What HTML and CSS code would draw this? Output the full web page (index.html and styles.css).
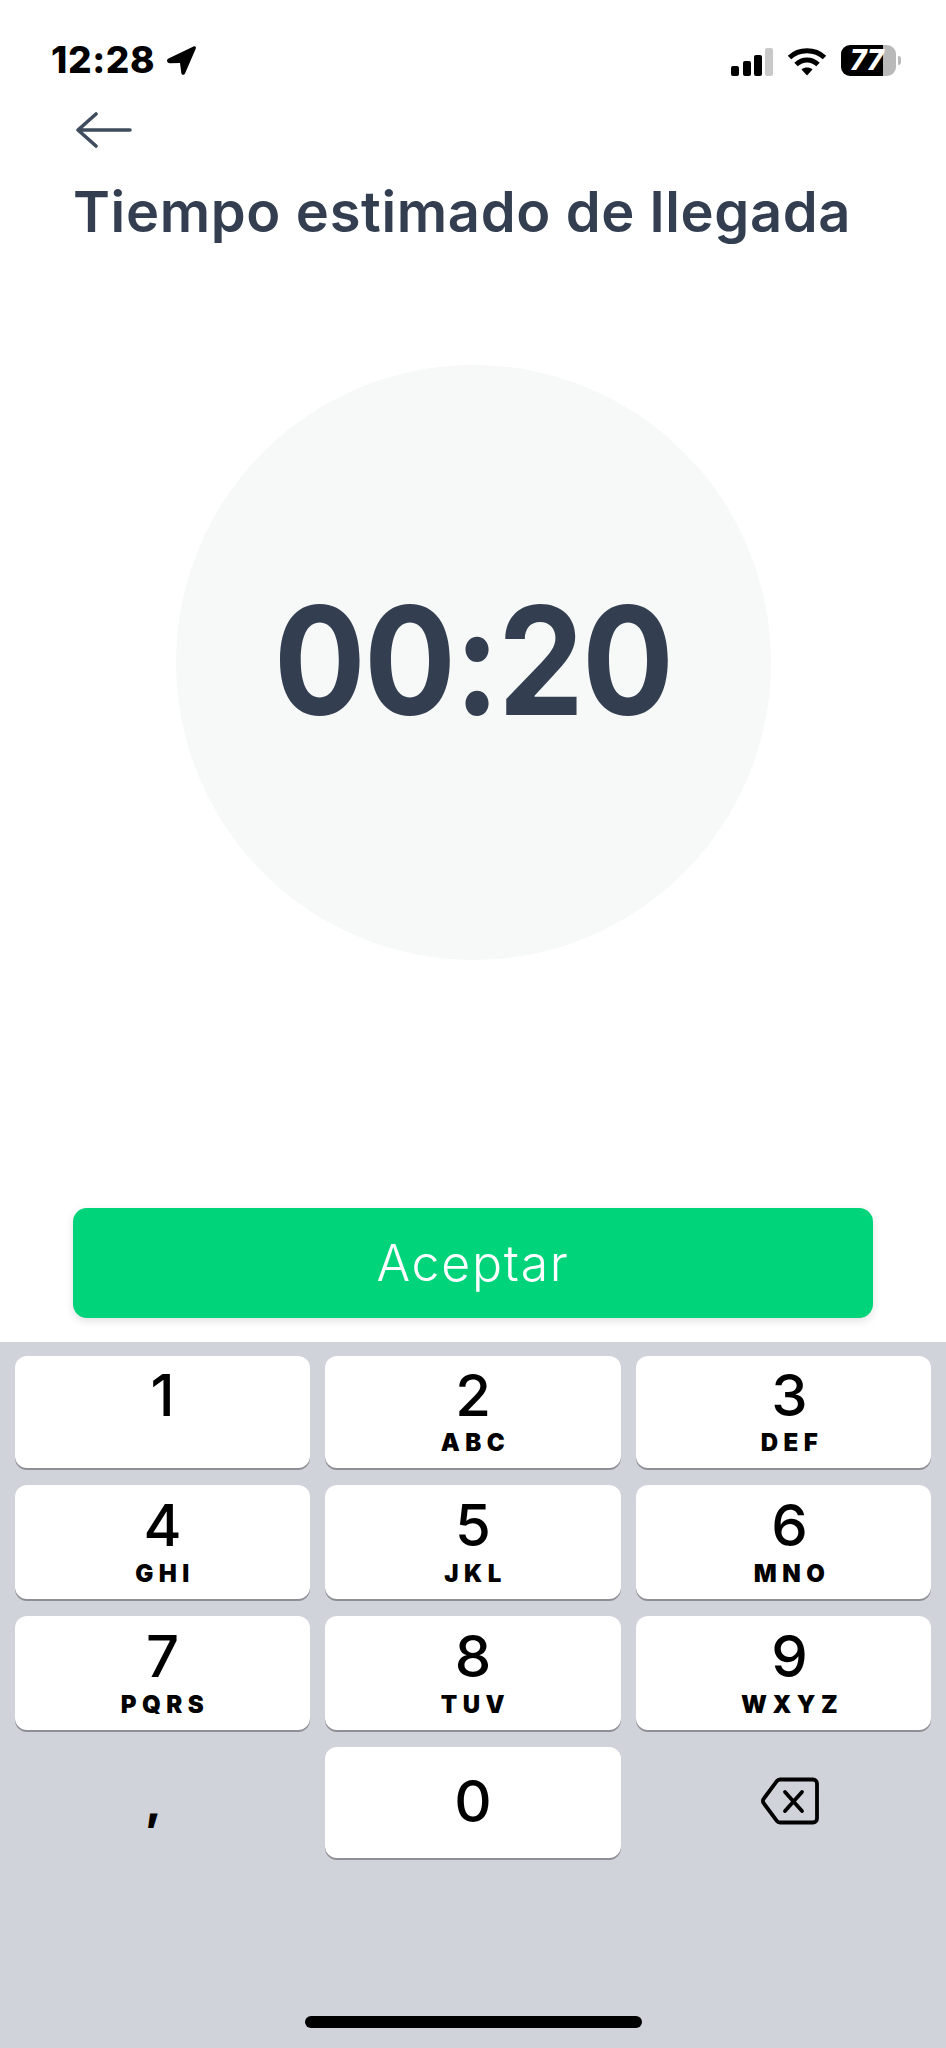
FILE: index.html
```html
<!DOCTYPE html>
<html lang="es">
<head>
<meta charset="utf-8">
<title>Tiempo estimado de llegada</title>
<link rel="stylesheet" href="styles.css">
</head>
<body>
<div class="screen">
  <div class="status">
    <div class="status-left">
      <span class="time">12:28</span>
      <svg class="loc" width="32" height="32" viewBox="0 0 32 32"><path d="M2.500 14.500 27.500 2.500c1.700-.8 3 .5 2.200 2.200L19 29.500c-.9 2-3.500 1.700-3.700-.5L14 19 4 19.200c-3.200 0-3.900-3.300-1.500-4.700z" fill="#000"/></svg>
    </div>
    <div class="status-right">
      <svg class="signal" width="42" height="28" viewBox="0 0 42 28"><rect x="0" y="18" width="8" height="10" rx="2" fill="#000"/><rect x="12" y="13" width="8" height="15" rx="2" fill="#000"/><rect x="23" y="7" width="8" height="21" rx="2" fill="#000"/><rect x="34" y="0" width="8" height="28" rx="2" fill="#c9c9c9"/></svg>
      <svg class="wifi" width="40" height="29" viewBox="0 0 40 29"><path d="M2.500 10.500C12 1.500 28 1.500 37.500 10.500M9 17.500c6.500-6 15.500-6 22 0" fill="none" stroke="#000" stroke-width="5"/><path d="M14.500 22.500c3-2.600 8-2.600 11 0L20 28.500z" fill="#000"/></svg>
      <div class="battery"><span class="battery-text">77</span></div>
      <span class="battery-nub"></span>
    </div>
  </div>
  <main class="content">
    <svg class="back" width="56" height="36" viewBox="0 0 56 36"><path d="M54 18H2M20 2 2 18l18 16" fill="none" stroke="#3f4c5e" stroke-width="3.600" stroke-linecap="round" stroke-linejoin="round"/></svg>
    <h1 class="title">Tiempo estimado de llegada</h1>
    <div class="circle"><span class="timer">00:20</span></div>
    <button class="accept" type="button">Aceptar</button>
  </main>
  <section class="keyboard">
    <div class="keys">
      <div class="key"><span class="digit">1</span></div>
      <div class="key"><span class="digit">2</span><span class="letters">ABC</span></div>
      <div class="key key-right"><span class="digit">3</span><span class="letters">DEF</span></div>
      <div class="key key-mid"><span class="digit">4</span><span class="letters">GHI</span></div>
      <div class="key key-mid"><span class="digit">5</span><span class="letters">JKL</span></div>
      <div class="key key-mid key-right"><span class="digit">6</span><span class="letters">MNO</span></div>
      <div class="key key-mid"><span class="digit">7</span><span class="letters">PQRS</span></div>
      <div class="key key-mid"><span class="digit">8</span><span class="letters">TUV</span></div>
      <div class="key key-mid key-right"><span class="digit">9</span><span class="letters">WXYZ</span></div>
      <div class="key key-flat"><span class="comma">,</span></div>
      <div class="key key-zero"><span class="digit">0</span></div>
      <div class="key key-flat key-del key-right">
        <svg width="58" height="48" viewBox="0 0 58 48"><path d="M19 2.500H52a4 4 0 0 1 4 4V41.500a4 4 0 0 1-4 4H19a4 4 0 0 1-3.200-1.700L2.500 26a4 4 0 0 1 0-4L15.800 4.200A4 4 0 0 1 19 2.500z" fill="none" stroke="#000" stroke-width="3.800"/><path d="M24 15 41 34M41 15 24 34" fill="none" stroke="#000" stroke-width="3.800" stroke-linecap="round"/></svg>
      </div>
    </div>
    <div class="home-bar"></div>
  </section>
</div>
</body>
</html>
```
FILE: styles.css
```css
* { box-sizing: border-box; }
html, body { margin: 0; padding: 0; background: #fff; }
body { font-family: "Inter", "Liberation Sans", sans-serif; }

.screen {
  width: 946px;
  height: 2048px;
  display: flex;
  flex-direction: column;
  overflow: hidden;
}

.status {
  height: 112px;
  flex: none;
  display: flex;
  justify-content: space-between;
  align-items: flex-start;
  padding: 44px 45px 0 51px;
}
.status-left { display: flex; align-items: center; gap: 11px; }
.time { font-size: 37px; font-weight: 800; line-height: 32px; color: #000; letter-spacing: 0.600px; }
.status-right { display: flex; align-items: center; height: 32px; }
.signal { margin-right: 14px; margin-top: 3px; }
.wifi { margin-right: 14px; margin-top: 2px; }
.battery {
  width: 55px;
  height: 31px;
  border-radius: 9px;
  background: linear-gradient(to right, #000 0, #000 42px, #b9b9b9 42px, #b9b9b9 100%);
  display: flex;
  align-items: center;
  padding-left: 9px;
}
.battery-text { font-size: 28px; font-weight: 800; font-style: italic; color: #fff; line-height: 28px; letter-spacing: 0; }
.battery-nub { width: 3px; height: 9px; margin-left: 2px; background: #b9b9b9; border-radius: 0 3px 3px 0; }

.content {
  flex: 1;
  display: flex;
  flex-direction: column;
  padding: 0 73px;
  position: relative;
}
.back { display: block; margin-left: 3px; flex: none; }
.title {
  margin: 34px 0 0;
  font-size: 56px;
  font-weight: 600;
  line-height: 60px;
  letter-spacing: 0.650px;
  color: #333f50;
  white-space: nowrap;
}
.circle {
  width: 595px;
  height: 595px;
  border-radius: 50%;
  background: #f7f8f8;
  align-self: center;
  margin-top: 123px;
  display: flex;
  align-items: center;
  justify-content: center;
  flex: none;
}
.timer { font-size: 150px; font-weight: 700; line-height: 1; color: #333f50; letter-spacing: -2px; transform: translateY(-2px) scaleX(.91); }
.accept {
  width: 800px;
  height: 110px;
  margin-top: 248px;
  flex: none;
  border: 0;
  border-radius: 14px;
  background: #00d47b;
  color: #fff;
  font-family: inherit;
  font-size: 50px;
  font-weight: 350;
  letter-spacing: 1.700px;
  box-shadow: 0 3px 8px rgba(0, 0, 0, 0.12);
}

.keyboard {
  height: 706px;
  flex: none;
  background: #d0d3da;
  padding: 14px 15px 0;
  display: flex;
  flex-direction: column;
}
.keys {
  display: grid;
  grid-template-columns: 295px 296px 295px;
  grid-template-rows: 112px 114px 114px 111px;
  column-gap: 15px;
  row-gap: 17px;
}
.key {
  background: #fff;
  border-radius: 12px;
  box-shadow: 0 2px 0 #8e8f94;
  display: flex;
  flex-direction: column;
  align-items: center;
  padding-top: 17px;
  color: #000;
}
.key-mid { padding-top: 18px; }
.key-mid .letters { margin-top: 18px; }
.key-right { padding-left: 12px; }
.digit { font-size: 58px; font-weight: 550; line-height: 44px; }
.letters { font-size: 24px; font-weight: 900; line-height: 18px; letter-spacing: 5.500px; margin-top: 17px; margin-right: -5px; }
.key-zero { padding-top: 32px; }
.key-flat { background: transparent; box-shadow: none; }
.comma { font-size: 46px; font-weight: 800; line-height: 44px; margin: 16px 0 0 -18px; }
.key-del { padding-top: 30px; }
.home-bar {
  width: 337px;
  height: 12px;
  border-radius: 6px;
  background: #000;
  align-self: center;
  margin-top: 158px;
}
```
